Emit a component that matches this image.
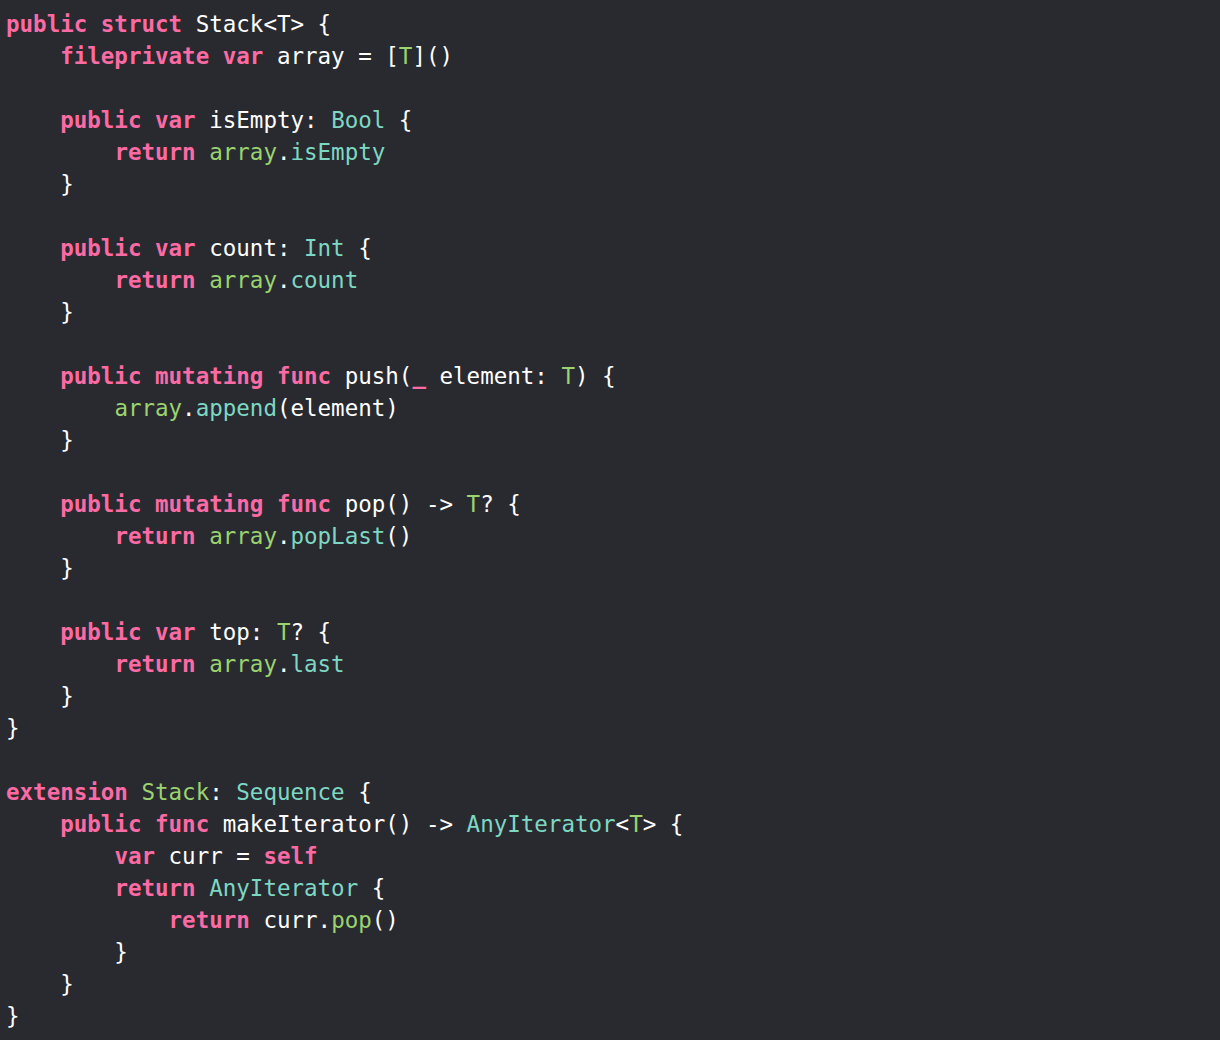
import React from "react";

type Tok = [string, string?];

const K = "k"; // keyword
const G = "g"; // green
const C = "c"; // teal

const lines: Tok[][] = [
  [["public", K], [" "], ["struct", K], [" Stack<T> {"]],
  [["    "], ["fileprivate", K], [" "], ["var", K], [" array = ["], ["T", G], ["]()"]],
  [],
  [["    "], ["public", K], [" "], ["var", K], [" isEmpty: "], ["Bool", C], [" {"]],
  [["        "], ["return", K], [" "], ["array", G], ["."], ["isEmpty", C]],
  [["    }"]],
  [],
  [["    "], ["public", K], [" "], ["var", K], [" count: "], ["Int", C], [" {"]],
  [["        "], ["return", K], [" "], ["array", G], ["."], ["count", C]],
  [["    }"]],
  [],
  [["    "], ["public", K], [" "], ["mutating", K], [" "], ["func", K], [" push("], ["_", K], [" element: "], ["T", G], [") {"]],
  [["        "], ["array", G], ["."], ["append", C], ["(element)"]],
  [["    }"]],
  [],
  [["    "], ["public", K], [" "], ["mutating", K], [" "], ["func", K], [" pop() -> "], ["T", G], ["? {"]],
  [["        "], ["return", K], [" "], ["array", G], ["."], ["popLast", C], ["()"]],
  [["    }"]],
  [],
  [["    "], ["public", K], [" "], ["var", K], [" top: "], ["T", G], ["? {"]],
  [["        "], ["return", K], [" "], ["array", G], ["."], ["last", C]],
  [["    }"]],
  [["}"]],
  [],
  [["extension", K], [" "], ["Stack", G], [": "], ["Sequence", C], [" {"]],
  [["    "], ["public", K], [" "], ["func", K], [" makeIterator() -> "], ["AnyIterator", C], ["<"], ["T", G], ["> {"]],
  [["        "], ["var", K], [" curr = "], ["self", K]],
  [["        "], ["return", K], [" "], ["AnyIterator", C], [" {"]],
  [["            "], ["return", K], [" curr."], ["pop", G], ["()"]],
  [["        }"]],
  [["    }"]],
  [["}"]],
];

const cls = (k?: string) => {
  if (k === K) return "text-[#fc6aa4] font-bold";
  if (k === G) return "text-[#9bd46f]";
  if (k === C) return "text-[#7dd8c3]";
  return "text-white";
};

export default function App() {
  return (
    <div className="min-h-[1040px] w-full bg-[#292a30] pl-[6px] pt-[8px]">
      <pre className="text-[22.5px] leading-[32px] font-['DejaVu_Sans_Mono',monospace] text-white">
        {lines.map((l, i) => (
          <div key={i} className="h-[32px]">
            {l.map((t, j) => (
              <span key={j} className={cls(t[1])}>
                {t[0]}
              </span>
            ))}
          </div>
        ))}
      </pre>
    </div>
  );
}
